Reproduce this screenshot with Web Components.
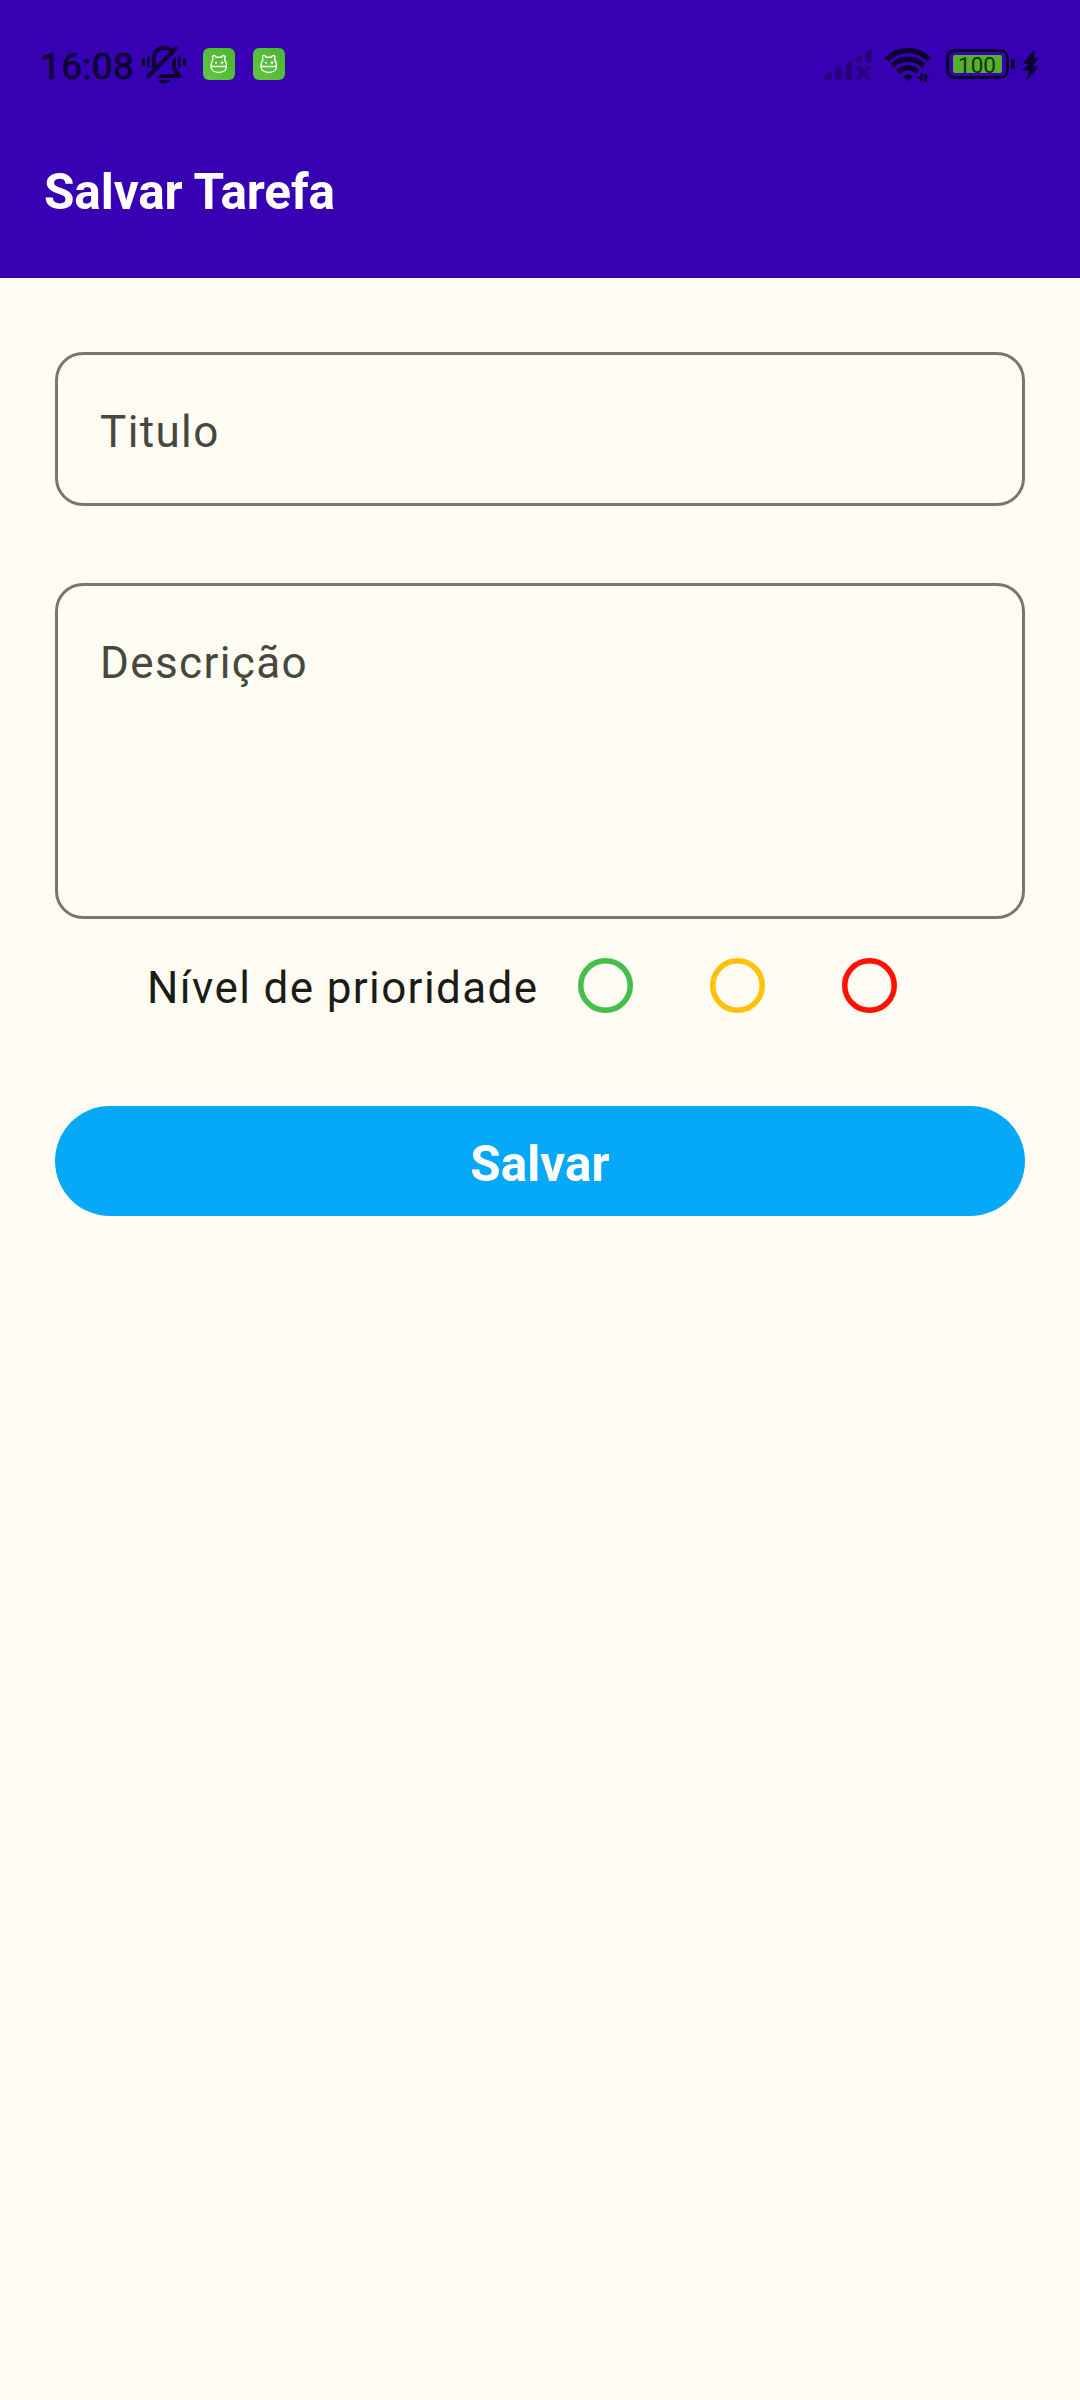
<!DOCTYPE html>
<html lang="pt-BR">
<head>
<meta charset="utf-8">
<title>Salvar Tarefa</title>
<style>
html,body{margin:0;padding:0}
body{width:1080px;min-height:2400px;background:#fffcf4;font-family:Roboto,sans-serif}
</style>
</head>
<body>
<save-task-screen></save-task-screen>
<script>
const define = (name, html) => {
  const template = document.createElement('template');
  template.innerHTML = html;
  customElements.define(name, class extends HTMLElement {
    constructor() {
      super();
      this.attachShadow({ mode: 'open' }).append(template.content.cloneNode(true));
    }
  });
};

define('app-badge', `
<style>:host{display:block;width:32px;height:32px}svg{display:block}</style>
<svg width="32" height="32" viewBox="0 0 32 32" fill="none">
  <defs><linearGradient id="g" x1="0" y1="1" x2="1" y2="0"><stop stop-color="#62c744"/><stop offset="1" stop-color="#49b52f"/></linearGradient></defs>
  <rect width="32" height="32" rx="6" fill="url(#g)"/>
  <path d="M8 18.500C8 15.500 9 13 10 11.500C8.800 9.500 9.500 7.500 11 7.500C12 7.500 12.700 8.200 13 9.200H18.500C18.800 8.200 19.500 7.500 20.500 7.500C22 7.500 22.700 9.500 21.500 11.500C22.700 13 23.500 15.500 23.500 18.500C23.500 22 20.500 24.500 15.800 24.500S8 22 8 18.500ZM8 18.500H23.500" stroke="#fff" stroke-width="1.350"/>
  <path d="M12 14.700h2M17.500 14.700h3M19 13.200v3M13 13.700v2" stroke="#fff" stroke-width="1.200"/>
</svg>`);

define('muted-bell', `
<style>:host{display:block;width:48px;height:42px}svg{display:block}</style>
<svg width="48" height="42" viewBox="140 44 48 42" fill="none" stroke="#0d0030" stroke-linecap="round" stroke-linejoin="round">
  <path d="M143.400 59.500v5M148.300 57.500v9M179.300 57.500v9M184.500 59.500v5" stroke-width="2.900"/>
  <path d="M153.900 67.500V58.500C153.900 51.500 158.500 48 164 48C167.500 48 170.500 49.200 172.200 51.200" stroke-width="4" stroke-linecap="butt"/>
  <path d="M148 76.700L176.500 47.800" stroke-width="4"/>
  <path d="M156.500 78L160.700 73.900H175.500L172 69V61L176 56.900V67.800L181.300 75.500Q182 78 179.500 78Z" fill="#0d0030" stroke="none"/>
  <path d="M157.800 79.800H170.500Q168.500 83.600 164.200 83.600T157.800 79.800Z" fill="#0d0030" stroke="none"/>
</svg>`);

define('signal-icon', `
<style>:host{display:block;width:50px;height:34px}svg{display:block}</style>
<svg width="50" height="34" viewBox="823 48 50 34" fill="#27007c">
  <path d="M824.500 80V77Q825 74 831.500 72V78.500Q831.500 80 830 80ZM835.300 80V71Q836 68 841.700 66V78.500Q841.700 80 840 80ZM845.500 80V65Q846 62 852 60.500V78.500Q852 80 850 80ZM855.700 62.800V59Q856.500 56 862 54.800V61Q862 62.800 860 62.800ZM865.400 62.800V54Q866 50.500 871.700 49V61Q871.700 62.800 870 62.800Z"/>
  <path d="M858 67.800L869 78.500M869 67.800L858 78.500" stroke="#27007c" stroke-width="4" stroke-linecap="round"/>
</svg>`);

define('wifi-icon', `
<style>:host{display:block;width:48px;height:38px}svg{display:block}</style>
<svg width="48" height="38" viewBox="884 46 48 38" fill="none" stroke="#0d0030">
  <path d="M886.500 59.800Q896 50.300 908 50.300T929.500 59.800M892.300 65.900Q899 59.200 908 59.200T923.800 65.900M898.100 72Q902.500 67.800 908 67.800T917.800 72" stroke-width="5.200"/>
  <path d="M903.200 76.300Q908 72.200 912.800 76.300L909 80.500Q908 81.400 907 80.500Z" fill="#0d0030" stroke="none"/>
  <path d="M921.300 73.200V81.500M925.300 82V74" stroke-width="2.600"/>
  <path d="M916.800 76.700H922V81.500ZM929.600 78.200H924.500V73.500Z" fill="#0d0030" stroke="none"/>
</svg>`);

define('battery-meter', `
<style>
:host{display:flex;align-items:center;gap:2px;height:30px}
.case{box-sizing:border-box;width:63px;height:30px;border:3px solid #0d0030;border-radius:8.500px;display:flex;align-items:center;justify-content:center}
.level{width:49px;height:18px;background:#55b128;border-radius:2px;display:flex;justify-content:center;align-items:center}
.level span{padding-top:1px;font:400 22.500px/22px Roboto,sans-serif;color:#13300f}
.cap{width:4px;height:10px;border-radius:2px;background:#0d0030}
</style>
<div class="case"><div class="level"><span><slot></slot></span></div></div><div class="cap"></div>`);

define('charge-icon', `
<style>:host{display:block;width:19px;height:32px}svg{display:block}</style>
<svg width="19" height="32" viewBox="1021.500 48.500 19 32" fill="#0d0030"><path d="M1035.300 49L1023 62.700L1029.500 63.700L1022 69.600L1029.500 70.200L1027 80L1039.200 66.300L1033 65.500L1040 57.300L1034.600 57Z"/></svg>`);

define('status-bar', `
<style>
:host{display:flex;align-items:flex-start;box-sizing:border-box;height:128px;padding:44px 40px 0}
time{display:block;width:94px;margin:1px 6px 0 0;font:400 37px/43px Roboto,sans-serif;letter-spacing:.4px;color:#0d0030;white-space:nowrap;-webkit-text-stroke:.7px #0d0030}
app-badge{margin:4px 0 0 15px}
app-badge+app-badge{margin-left:18px}
.right{display:flex;margin-left:auto;align-items:flex-start}
signal-icon{margin:4px 11px 0 0}
wifi-icon{margin:2px 14px 0 0}
battery-meter{margin:5px 6px 0 0}
charge-icon{margin:4.500px .5px 0 0}
</style>
<time>16:08</time><muted-bell></muted-bell><app-badge></app-badge><app-badge></app-badge>
<div class="right"><signal-icon></signal-icon><wifi-icon></wifi-icon><battery-meter>100</battery-meter><charge-icon></charge-icon></div>`);

define('top-bar', `
<style>
:host{display:block;height:278px;background:#3700b3}
h1{margin:0;padding:35px 44px 0;font:700 49.500px/58px Roboto,sans-serif;color:#fff;letter-spacing:-.13px}
</style>
<status-bar></status-bar><h1><slot></slot></h1>`);

define('outlined-field', `
<style>
:host{display:block;box-sizing:border-box;border:3px solid #77786a;border-radius:28px;padding:51px 42px;font:400 44px/52px Roboto,sans-serif;letter-spacing:1.375px;color:#46483c}
</style><slot></slot>`);

define('priority-radio', `
<style>:host{display:block;width:55px;height:55px}svg{display:block}</style>
<svg width="55" height="55"><circle cx="27.500" cy="27.500" r="24.750" fill="none" stroke="var(--tone)" stroke-width="5.500"/></svg>`);

define('priority-picker', `
<style>
:host{display:flex;align-items:flex-start;box-sizing:border-box;height:136px;padding:39px 0 0 92px}
.label{width:431px;margin-top:4px;font:400 44px/52px Roboto,sans-serif;letter-spacing:1.375px;color:#1c1c17;white-space:nowrap}
.choices{display:flex;gap:77px}
</style>
<div class="label"><slot></slot></div>
<div class="choices">
  <priority-radio style="--tone:#46bf4a"></priority-radio>
  <priority-radio style="--tone:#ffc10a"></priority-radio>
  <priority-radio style="--tone:#ff1100"></priority-radio>
</div>`);

define('save-button', `
<style>
:host{display:flex;justify-content:center;align-items:center;box-sizing:border-box;height:110px;margin-top:51px;padding-top:6px;border-radius:55px;background:#05a9f7;color:#fff;font:700 49.500px/58px Roboto,sans-serif}
</style><slot></slot>`);

define('save-task-screen', `
<style>
:host{display:block}
main{display:flex;flex-direction:column;padding:74px 55px 0}
.title{height:154px}
.description{height:336px;margin-top:77px}
</style>
<top-bar>Salvar Tarefa</top-bar>
<main>
  <outlined-field class="title">Titulo</outlined-field>
  <outlined-field class="description">Descrição</outlined-field>
  <priority-picker>Nível de prioridade</priority-picker>
  <save-button>Salvar</save-button>
</main>`);
</script>
</body>
</html>
